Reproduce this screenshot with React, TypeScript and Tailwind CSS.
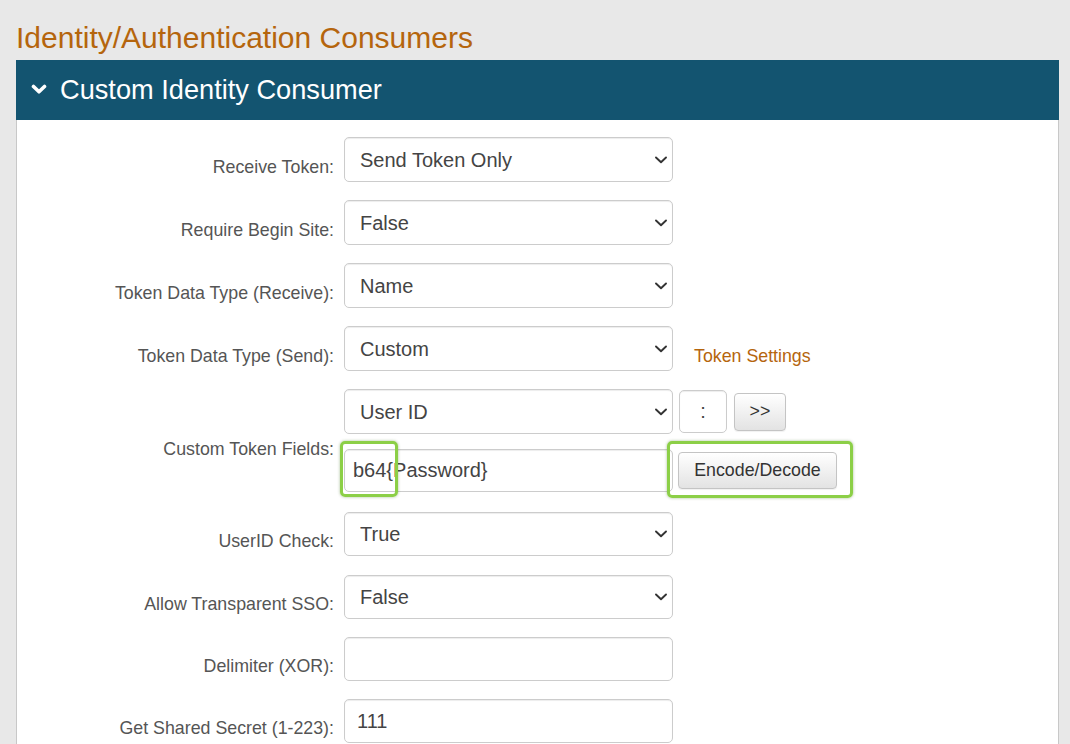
import React from "react";

function Chevron() {
  return (
    <svg className="pointer-events-none absolute right-[6px] top-1/2 h-[8px] w-[12px] -translate-y-1/2" viewBox="0 0 12 8" fill="none">
      <path d="M1 1.5 L6 6.2 L11 1.5" stroke="#333" strokeWidth="1.9" strokeLinecap="round" strokeLinejoin="round" />
    </svg>
  );
}

function Select({ value, h = "h-[45px]" }: { value: string; h?: string }) {
  return (
    <div className={`relative w-[329px] shrink-0 ${h}`}>
      <select
        defaultValue={value}
        className="h-full w-full appearance-none rounded-[5px] border border-[#cccccc] bg-white pl-[15px] pr-[24px] text-[20px] text-[#444] shadow-[inset_0_1px_1px_rgba(0,0,0,0.075)] outline-none"
      >
        <option>{value}</option>
      </select>
      <Chevron />
    </div>
  );
}

function Label({ children }: { children: React.ReactNode }) {
  return (
    <label className="w-[317px] shrink-0 pt-[15px] text-right text-[17.8px] leading-[25px] text-[#555]">
      {children}
    </label>
  );
}

function Row({ label, children, className = "" }: { label: string; children: React.ReactNode; className?: string }) {
  return (
    <div className={`flex items-center ${className}`}>
      <Label>{label}</Label>
      <div className="ml-[10px] flex items-center">{children}</div>
    </div>
  );
}

function Highlight({ className }: { className: string }) {
  return (
    <div
      className={`pointer-events-none absolute rounded-[5px] border-[3px] border-[#8ccf47] shadow-[0_0_3px_rgba(60,110,20,0.45)] ${className}`}
    />
  );
}

export default function App() {
  const btn =
    "rounded-[4px] border border-[#c4c4c4] bg-gradient-to-b from-[#ffffff] to-[#e3e3e3] text-[17.8px] text-[#333] shadow-[0_1px_1px_rgba(0,0,0,0.06)]";
  const input =
    "rounded-[5px] border border-[#cccccc] bg-white text-[20px] text-[#444] shadow-[inset_0_1px_1px_rgba(0,0,0,0.075)] outline-none";

  return (
    <div className="h-[744px] w-full overflow-hidden bg-[#e8e8e8] font-['Liberation_Sans',Arial,sans-serif]">
      <div className="pl-[16px] pr-[11px]">
        <h1 className="mb-[6px] pt-[21px] text-[30px] leading-[33px] text-[#b5650d]">
          Identity/Authentication Consumers
        </h1>

        <div>
          <div className="flex h-[60px] items-center bg-[#135470] pl-[15px]">
            <svg className="-mt-[2px] h-[11px] w-[16px]" viewBox="0 0 16 11" fill="none">
              <path d="M2.5 2.5 L8 7.8 L13.5 2.5" stroke="#fff" strokeWidth="3.6" strokeLinecap="round" strokeLinejoin="round" />
            </svg>
            <span className="ml-[13px] text-[27.2px] leading-none text-white">Custom Identity Consumer</span>
          </div>

          <div className="flex flex-col gap-[18px] border-x border-[#c8c8c8] bg-white pb-[20px] pt-[17px]">
            <Row label="Receive Token:">
              <Select value="Send Token Only" />
            </Row>
            <Row label="Require Begin Site:">
              <Select value="False" />
            </Row>
            <Row label="Token Data Type (Receive):">
              <Select value="Name" />
            </Row>
            <Row label="Token Data Type (Send):">
              <Select value="Custom" />
              <a href="#" className="ml-[21px] pt-[15px] text-[17.8px] leading-[25px] text-[#b5650d]">
                Token Settings
              </a>
            </Row>

            <div className="flex items-center">
              <Label>Custom Token Fields:</Label>
              <div className="ml-[10px] flex flex-col">
                <div className="flex h-[45px] items-center">
                  <Select value="User ID" />
                  <input defaultValue=":" className={`${input} ml-[6px] h-[43px] w-[48px] text-center`} />
                  <button className={`${btn} ml-[7px] h-[38px] w-[52px]`}>&gt;&gt;</button>
                </div>
                <div className="-mb-[5px] mt-[7px] flex h-[58px] items-center">
                  <div className="relative">
                    <input defaultValue="b64{Password}" className={`${input} h-[43px] w-[329px] pl-[8px]`} />
                    <Highlight className="-left-[4px] -top-[8px] h-[56px] w-[58px]" />
                  </div>
                  <div className="relative ml-[5px]">
                    <button className={`${btn} h-[37px] w-[159px]`}>Encode/Decode</button>
                    <Highlight className="-left-[11px] -top-[11px] h-[57px] w-[186px]" />
                  </div>
                </div>
              </div>
            </div>

            <Row label="UserID Check:">
              <Select value="True" h="h-[44px]" />
            </Row>
            <Row label="Allow Transparent SSO:" className="mt-[1px]">
              <Select value="False" h="h-[44px]" />
            </Row>
            <Row label="Delimiter (XOR):">
              <input className={`${input} h-[44px] w-[329px] px-[12px]`} />
            </Row>
            <Row label="Get Shared Secret (1-223):">
              <input defaultValue="111" className={`${input} h-[44px] w-[329px] px-[12px]`} />
            </Row>
          </div>
        </div>
      </div>
    </div>
  );
}
